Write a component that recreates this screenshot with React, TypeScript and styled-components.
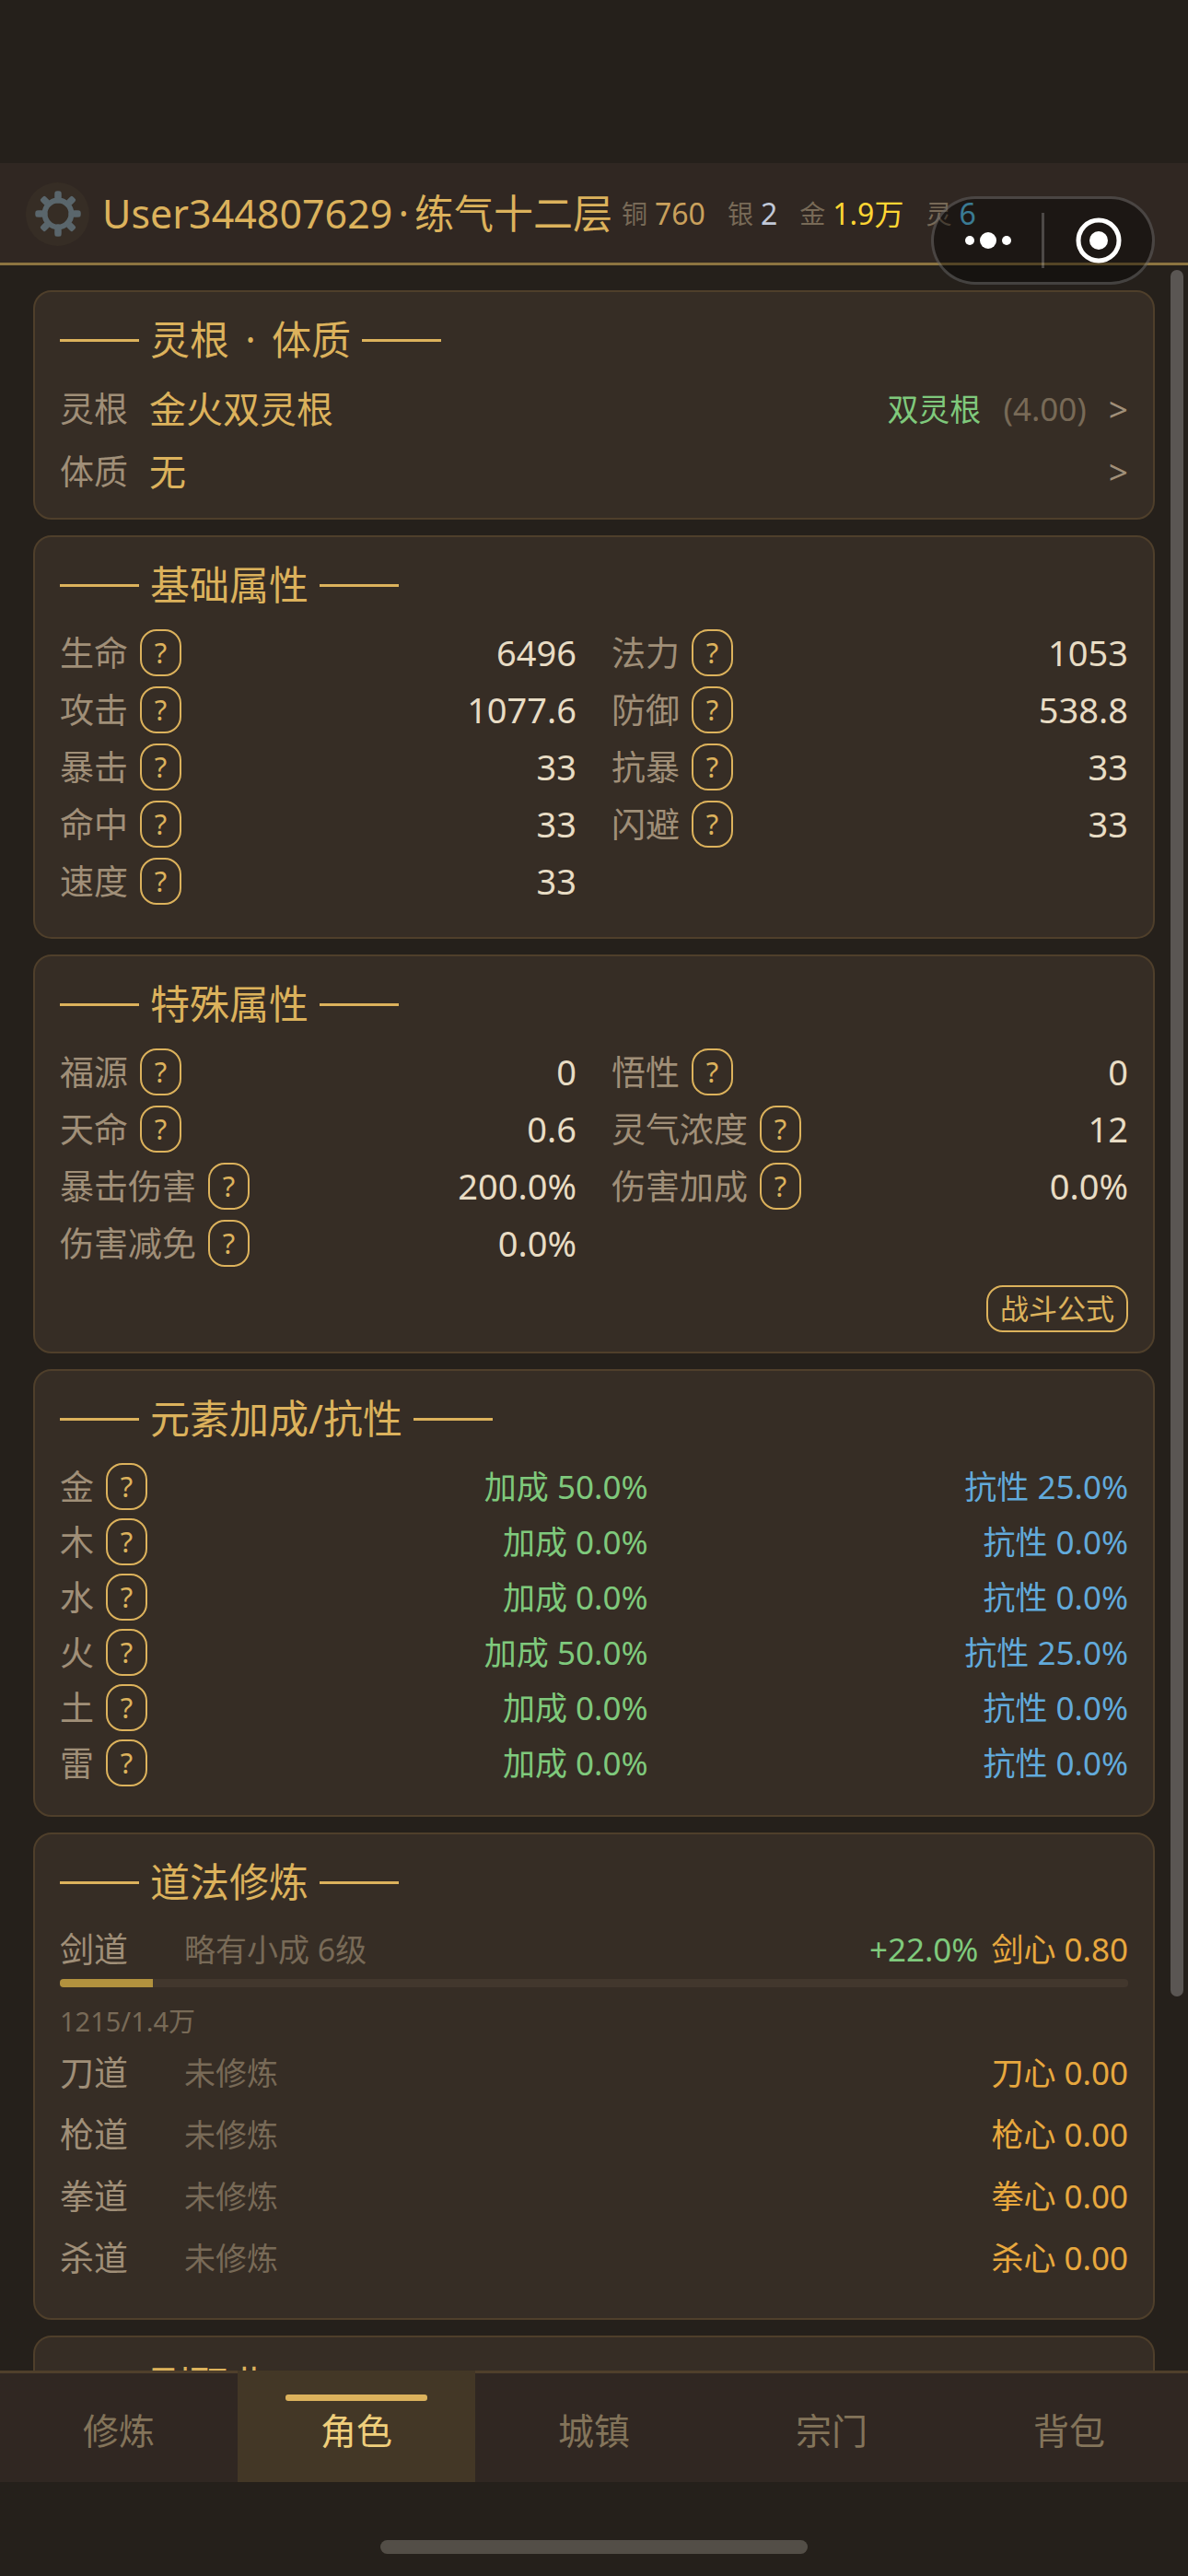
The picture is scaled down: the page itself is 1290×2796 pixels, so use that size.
import React from "react";
import styled, { createGlobalStyle } from "styled-components";

const color = {
  page: "#25201b",
  bar: "#302722",
  card: "#362d25",
  line: "#4f3f2b",
  gold: "#dcb25c",
  goldDim: "#8c7440",
  label: "#a08f78",
  muted: "#786a57",
  value: "#e8dcc4",
  green: "#7fc97c",
  blue: "#62aadb",
  orange: "#e8a83e",
};

const GlobalStyle = createGlobalStyle`
  *, *::before, *::after { box-sizing: border-box; }
  body {
    margin: 0;
    background: ${color.page};
    color: ${color.value};
    font-family: "Noto Sans", "Noto Sans CJK SC", sans-serif;
  }
  button { font: inherit; color: inherit; background: none; border: 0; padding: 0; cursor: pointer; }
  h1, h2, p, ul, dl, dd, dt { margin: 0; padding: 0; font-weight: 400; list-style: none; }
`;

const Screen = styled.div`
  display: flex;
  flex-direction: column;
  height: 100vh;
  padding-top: 177px;
`;

const Header = styled.header`
  position: relative;
  display: flex;
  align-items: center;
  flex: none;
  height: 111px;
  padding: 2px 28px 0;
  background: ${color.bar};
  border-bottom: 3px solid ${color.goldDim};
  white-space: nowrap;
`;

const SettingsButton = styled.button`
  display: grid;
  place-items: center;
  flex: none;
  width: 69px;
  height: 69px;
  margin-right: 14px;
  border-radius: 50%;
  background: ${color.card};
`;

const PlayerName = styled.h1`
  margin-right: 10px;
  font-size: 43px;
  line-height: 60px;
  color: ${color.gold};
`;

const Dot = styled.span`
  padding: 0 6px;
`;

const Purse = styled.dl`
  display: flex;
  gap: 24px;
`;

const Coin = styled.div<{ $tone: string }>`
  display: flex;
  align-items: center;
  gap: 8px;
  line-height: 44px;
  dt { font-size: 28px; color: ${color.muted}; }
  dd { font-size: 32px; color: ${(p) => p.$tone}; }
`;

const Capsule = styled.div`
  position: absolute;
  z-index: 2;
  top: 36px;
  right: 36px;
  display: flex;
  align-items: center;
  width: 243px;
  height: 96px;
  border: 3px solid rgba(255, 255, 255, 0.2);
  border-radius: 48px;
  background: rgba(0, 0, 0, 0.4);
`;

const CapsuleButton = styled.button`
  display: grid;
  place-items: center;
  flex: 1;
  height: 100%;
`;

const CapsuleDivider = styled.span`
  width: 3px;
  height: 60px;
  background: rgba(255, 255, 255, 0.22);
`;

const Body = styled.div`
  position: relative;
  flex: 1;
  min-height: 0;
`;

const Scroller = styled.main`
  display: flex;
  flex-direction: column;
  gap: 17px;
  height: 100%;
  padding: 27px 36px;
  overflow-y: auto;
  scrollbar-width: none;
`;

const ScrollThumb = styled.div`
  position: absolute;
  top: 5px;
  right: 5px;
  width: 14px;
  height: 82%;
  border-radius: 7px;
  background: #5a5653;
`;

const Card = styled.section`
  flex: none;
  padding: 24px 27px 21px;
  border: 2px solid ${color.line};
  border-radius: 20px;
  background: ${color.card};
`;

const CardTitle = styled.h2`
  display: flex;
  align-items: center;
  gap: 12px;
  margin-bottom: 20px;
  font-size: 43px;
  line-height: 56px;
  color: ${color.gold};
  &::before, &::after {
    content: "";
    width: 86px;
    height: 3px;
    background: ${color.gold};
  }
`;

const RootList = styled.ul`
  display: grid;
  gap: 14px;
  padding-bottom: 2px;
`;

const RootRow = styled.button`
  display: flex;
  align-items: center;
  width: 100%;
  height: 54px;
  line-height: 54px;
  text-align: left;
`;

const Label = styled.span`
  font-size: 37px;
  color: ${color.label};
`;

const RootName = styled.span`
  flex: 1;
  margin-left: 23px;
  font-size: 40px;
  color: ${color.gold};
`;

const Small = styled.span<{ $tone: string }>`
  font-size: 34px;
  color: ${(p) => p.$tone};
`;

const Metric = styled(Small)`
  font-size: 35px;
`;

const Chevron = styled(Small)`
  font-size: 37px;
`;

const RootMeta = styled.span`
  display: flex;
  gap: 24px;
`;

const StatGrid = styled.dl`
  display: grid;
  grid-template-columns: 1fr 1fr;
  gap: 11px 38px;
`;

const BaseStats = styled(StatGrid)`
  padding-bottom: 14px;
`;

const StatRow = styled.div`
  display: flex;
  align-items: center;
  justify-content: space-between;
  height: 51px;
  line-height: 51px;
`;

const StatLabel = styled.dt`
  display: flex;
  align-items: center;
  gap: 13px;
`;

const StatValue = styled.dd`
  font-size: 38px;
`;

const OutlineButton = styled.button`
  height: 51px;
  padding: 0 13px;
  border: 2px solid ${color.gold};
  border-radius: 18px;
  font-size: 31px;
  line-height: 45px;
  color: ${color.gold};
`;

const HelpButton = styled(OutlineButton)`
  width: 45px;
  padding: 0;
`;

const CardFooter = styled.div`
  display: flex;
  justify-content: flex-end;
  padding-top: 20px;
`;

const ElementList = styled.ul`
  display: grid;
  gap: 9px;
  padding-bottom: 10px;
`;

const ElementRow = styled.li`
  display: flex;
  align-items: center;
  justify-content: space-between;
  height: 51px;
  line-height: 51px;
`;

const ElementName = styled.span`
  display: flex;
  align-items: center;
  gap: 13px;
  padding-right: 22px;
`;

const PathList = styled.ul`
  display: grid;
  gap: 17px;
  padding-bottom: 19px;
`;

const PathRow = styled.div`
  display: flex;
  align-items: center;
  height: 50px;
  line-height: 50px;
`;

const PathName = styled(Label)`
  width: 135px;
`;

const PathScore = styled.span`
  display: flex;
  gap: 14px;
  margin-left: auto;
`;

const Track = styled.div`
  height: 9px;
  margin-top: 7px;
  border-radius: 4px;
  overflow: hidden;
  background: #42372d;
`;

const Fill = styled.div`
  height: 100%;
  background: #b2923e;
`;

const PathProgress = styled.p`
  padding-top: 17px;
  margin-bottom: -6px;
  font-size: 29px;
  line-height: 40px;
  color: ${color.muted};
`;

const TabBar = styled.nav`
  display: flex;
  flex: none;
  height: 121px;
  background: ${color.bar};
`;

const Tab = styled.button<{ $active: boolean }>`
  position: relative;
  flex: 1;
  border-top: 3px solid ${(p) => (p.$active ? "#433726" : color.line)};
  padding-top: 1px;
  background: ${(p) => (p.$active ? "#433726" : "transparent")};
  font-size: 39px;
  color: ${(p) => (p.$active ? "#f0cf7c" : "#83745a")};
  &::before {
    content: "";
    display: ${(p) => (p.$active ? "block" : "none")};
    position: absolute;
    top: 23px;
    left: 20%;
    width: 60%;
    height: 7px;
    border-radius: 3px;
    background: ${color.gold};
  }
`;

const HomeArea = styled.footer`
  display: flex;
  justify-content: center;
  flex: none;
  height: 102px;
  padding-top: 63px;
`;

const HomeIndicator = styled.div`
  width: 36%;
  height: 15px;
  border-radius: 8px;
  background: #534e47;
`;

const coins = [
  { name: "铜", amount: "760", tone: "#c9a05c" },
  { name: "银", amount: "2", tone: "#c0c8d8" },
  { name: "金", amount: "1.9万", tone: "#ffd633" },
  { name: "灵", amount: "6", tone: "#62cdf5" },
];

const baseStats = [
  ["生命", "6496"], ["法力", "1053"],
  ["攻击", "1077.6"], ["防御", "538.8"],
  ["暴击", "33"], ["抗暴", "33"],
  ["命中", "33"], ["闪避", "33"],
  ["速度", "33"],
];

const specialStats = [
  ["福源", "0"], ["悟性", "0"],
  ["天命", "0.6"], ["灵气浓度", "12"],
  ["暴击伤害", "200.0%"], ["伤害加成", "0.0%"],
  ["伤害减免", "0.0%"],
];

const elements = [
  ["金", "50.0%", "25.0%"],
  ["木", "0.0%", "0.0%"],
  ["水", "0.0%", "0.0%"],
  ["火", "50.0%", "25.0%"],
  ["土", "0.0%", "0.0%"],
  ["雷", "0.0%", "0.0%"],
];

type Path = {
  name: string;
  rank: string;
  heart: string;
  bonus?: string;
  progress?: { text: string; now: number; max: number };
};

const paths: Path[] = [
  { name: "剑道", rank: "略有小成 6级", heart: "剑心 0.80", bonus: "+22.0%", progress: { text: "1215/1.4万", now: 1215, max: 14000 } },
  { name: "刀道", rank: "未修炼", heart: "刀心 0.00" },
  { name: "枪道", rank: "未修炼", heart: "枪心 0.00" },
  { name: "拳道", rank: "未修炼", heart: "拳心 0.00" },
  { name: "杀道", rank: "未修炼", heart: "杀心 0.00" },
];

const tabs = ["修炼", "角色", "城镇", "宗门", "背包"];

function GearIcon() {
  return (
    <svg width="50" height="50" viewBox="-25 -25 50 50" aria-hidden="true">
      <g stroke="#5a666c" fill="none">
        <circle r="14.5" strokeWidth="6" />
        {[0, 45, 90, 135, 180, 225, 270, 315].map((a) => (
          <g key={a} transform={`rotate(${a})`}>
            <line y1="-15" y2="-21" strokeWidth="7" strokeLinecap="round" />
            <rect x="-2" y="-23" width="4" height="5" strokeWidth="3" strokeLinejoin="round" />
          </g>
        ))}
      </g>
    </svg>
  );
}

function Stat({ name, value }: { name: string; value: string }) {
  return (
    <StatRow>
      <StatLabel>
        <Label>{name}</Label>
        <HelpButton type="button">?</HelpButton>
      </StatLabel>
      <StatValue>{value}</StatValue>
    </StatRow>
  );
}

export default function App() {
  return (
    <>
      <GlobalStyle />
      <Screen>
        <Header>
          <SettingsButton type="button" aria-label="设置">
            <GearIcon />
          </SettingsButton>
          <PlayerName>User344807629<Dot>·</Dot>练气十二层</PlayerName>
          <Purse>
            {coins.map((c) => (
              <Coin key={c.name} $tone={c.tone}>
                <dt>{c.name}</dt>
                <dd>{c.amount}</dd>
              </Coin>
            ))}
          </Purse>
          <Capsule>
            <CapsuleButton type="button" aria-label="更多">
              <svg width="52" height="20" viewBox="0 0 52 20" fill="#fff" aria-hidden="true">
                <circle cx="6" cy="10" r="5" />
                <circle cx="26" cy="10" r="9" />
                <circle cx="46" cy="10" r="5" />
              </svg>
            </CapsuleButton>
            <CapsuleDivider />
            <CapsuleButton type="button" aria-label="关闭">
              <svg width="52" height="52" viewBox="0 0 52 52" aria-hidden="true">
                <circle cx="26" cy="26" r="22" fill="none" stroke="#fff" strokeWidth="5" />
                <circle cx="26" cy="26" r="10" fill="#fff" />
              </svg>
            </CapsuleButton>
          </Capsule>
        </Header>

        <Body>
          <Scroller>
            <Card>
              <CardTitle><span>灵根<Dot> · </Dot>体质</span></CardTitle>
              <RootList>
                <li>
                  <RootRow type="button">
                    <Label>灵根</Label>
                    <RootName>金火双灵根</RootName>
                    <RootMeta>
                      <Small $tone={color.green}>双灵根</Small>
                      <Metric $tone={color.muted}>(4.00)</Metric>
                      <Chevron $tone={color.label}>&gt;</Chevron>
                    </RootMeta>
                  </RootRow>
                </li>
                <li>
                  <RootRow type="button">
                    <Label>体质</Label>
                    <RootName>无</RootName>
                    <Chevron $tone={color.label}>&gt;</Chevron>
                  </RootRow>
                </li>
              </RootList>
            </Card>

            <Card>
              <CardTitle>基础属性</CardTitle>
              <BaseStats>
                {baseStats.map(([n, v]) => <Stat key={n} name={n} value={v} />)}
              </BaseStats>
            </Card>

            <Card>
              <CardTitle>特殊属性</CardTitle>
              <StatGrid>
                {specialStats.map(([n, v]) => <Stat key={n} name={n} value={v} />)}
              </StatGrid>
              <CardFooter>
                <OutlineButton type="button">战斗公式</OutlineButton>
              </CardFooter>
            </Card>

            <Card>
              <CardTitle>元素加成/抗性</CardTitle>
              <ElementList>
                {elements.map(([n, gain, resist]) => (
                  <ElementRow key={n}>
                    <ElementName>
                      <Label>{n}</Label>
                      <HelpButton type="button">?</HelpButton>
                    </ElementName>
                    <Metric $tone={color.green}>{`加成 ${gain}`}</Metric>
                    <Metric $tone={color.blue}>{`抗性 ${resist}`}</Metric>
                  </ElementRow>
                ))}
              </ElementList>
            </Card>

            <Card>
              <CardTitle>道法修炼</CardTitle>
              <PathList>
                {paths.map((p) => (
                  <li key={p.name}>
                    <PathRow>
                      <PathName>{p.name}</PathName>
                      <Small $tone={color.muted}>{p.rank}</Small>
                      <PathScore>
                        {p.bonus && <Metric $tone={color.green}>{p.bonus}</Metric>}
                        <Metric $tone={color.orange}>{p.heart}</Metric>
                      </PathScore>
                    </PathRow>
                    {p.progress && (
                      <>
                        <Track role="progressbar" aria-label={p.name} aria-valuenow={p.progress.now} aria-valuemax={p.progress.max}>
                          <Fill style={{ width: `${(p.progress.now / p.progress.max) * 100}%` }} />
                        </Track>
                        <PathProgress>{p.progress.text}</PathProgress>
                      </>
                    )}
                  </li>
                ))}
              </PathList>
            </Card>

            <Card>
              <CardTitle>副职业</CardTitle>
            </Card>
          </Scroller>
          <ScrollThumb />
        </Body>

        <TabBar>
          {tabs.map((t) => (
            <Tab key={t} type="button" $active={t === "角色"} aria-current={t === "角色" ? "page" : undefined}>
              {t}
            </Tab>
          ))}
        </TabBar>
        <HomeArea>
          <HomeIndicator />
        </HomeArea>
      </Screen>
    </>
  );
}
